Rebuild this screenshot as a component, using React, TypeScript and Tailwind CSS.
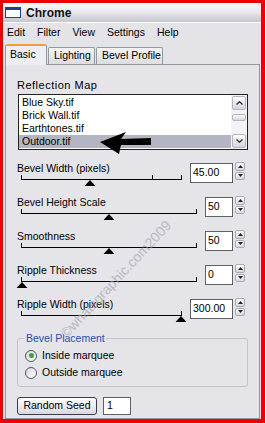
import React from "react";

const items = ["Blue Sky.tif", "Brick Wall.tif", "Earthtones.tif", "Outdoor.tif"];

const sliders = [
  { label: "Bevel Width (pixels)", value: "45.00", pos: 43, wide: true, midTick: true },
  { label: "Bevel Height Scale", value: "50", pos: 50, wide: false, midTick: false },
  { label: "Smoothness", value: "50", pos: 50, wide: false, midTick: false },
  { label: "Ripple Thickness", value: "0", pos: 0, wide: false, midTick: false },
  { label: "Ripple Width (pixels)", value: "300.00", pos: 100, wide: true, midTick: false },
];

function Spinner() {
  return (
    <div className="ml-[2px] mt-[1px] flex h-[18px] w-[10px] flex-col gap-[1px]">
      <div className="flex flex-1 items-center justify-center rounded-[2px] border border-[#a9a9b6] bg-gradient-to-b from-white to-[#d6d6de]">
        <svg width="5" height="3" viewBox="0 0 5 3"><path d="M0 3 L2.5 0 L5 3 Z" fill="#222" /></svg>
      </div>
      <div className="flex flex-1 items-center justify-center rounded-[2px] border border-[#a9a9b6] bg-gradient-to-b from-white to-[#d6d6de]">
        <svg width="5" height="3" viewBox="0 0 5 3"><path d="M0 0 L2.5 3 L5 0 Z" fill="#222" /></svg>
      </div>
    </div>
  );
}

function SliderRow({ label, value, pos, wide, midTick }: (typeof sliders)[number]) {
  return (
    <div className="flex h-[34px] items-start pl-[11px] pr-[14px]">
      <div className="flex-1">
        <div className="h-[14px] leading-[14px]">{label}</div>
        <div className="relative ml-[4px] h-[5px] border-x border-b border-black">
          {midTick && <div className="absolute bottom-0 left-[130px] h-[4px] w-px bg-black" />}
          <svg
            className="absolute top-[5px] -translate-x-1/2"
            style={{ left: `${pos}%` }}
            width="11"
            height="6"
            viewBox="0 0 11 6"
          >
            <path d="M0 6 L5.5 0 L11 6 Z" fill="#000" />
          </svg>
        </div>
      </div>
      <div
        className={`ml-[8px] mt-[2px] flex h-[20px] items-center border border-[#5f5f66] bg-white pl-[2px] ${
          wide ? "w-[43px]" : "w-[28px]"
        }`}
      >
        {value}
      </div>
      <Spinner />
    </div>
  );
}

function Radio({ checked, label }: { checked: boolean; label: string }) {
  return (
    <div className="flex h-[17px] items-center">
      <div className="flex h-[12px] w-[12px] items-center justify-center rounded-full border border-[#4d5866] bg-gradient-to-br from-[#d8d8de] to-white">
        {checked && <div className="h-[5px] w-[5px] rounded-full bg-[#37a33c]" />}
      </div>
      <span className="ml-[5px]">{label}</span>
    </div>
  );
}

export default function App() {
  return (
    <div className="relative h-[423px] w-[265px] overflow-hidden border-b-[4px] border-l-[3px] border-r-[4px] border-t-[3px] border-[#ee0000] bg-[#e3e3e8] font-['Liberation_Sans',Arial,sans-serif] text-[10.5px] text-black">
      {/* title bar */}
      <div className="flex h-[19px] items-center bg-gradient-to-b from-[#fbfbfc] via-[#e6e6ec] to-[#c6c6cf] pl-[2px]">
        <div className="h-[11px] w-[16px] border border-t-[3px] border-[#1f3f8f] bg-white" />
        <span className="ml-[5px] text-[12px] font-bold text-[#111]">Chrome</span>
      </div>
      <div className="h-px bg-white" />

      {/* menu */}
      <div className="flex h-[20px] items-center gap-[12px] pl-[4px]">
        <span>Edit</span>
        <span>Filter</span>
        <span>View</span>
        <span>Settings</span>
        <span>Help</span>
      </div>

      {/* tabs */}
      <div className="flex h-[21px] items-end pl-[2px]">
        <div className="relative z-10 -mb-px flex h-[21px] w-[42px] flex-col rounded-t-[2px] border-x border-[#919b9c] bg-[#eeeef2]">
          <div className="h-[2px] rounded-t-[2px] bg-[#f0a030]" />
          <span className="pl-[4px] pt-[1px] leading-[14px]">Basic</span>
        </div>
        <div className="ml-px flex h-[17px] w-[47px] items-center rounded-t-[2px] border-x border-t border-[#919b9c] bg-gradient-to-b from-[#f4f4f6] to-[#dcdce2] pl-[5px]">
          Lighting
        </div>
        <div className="ml-px flex h-[17px] w-[67px] items-center rounded-t-[2px] border-x border-t border-[#919b9c] bg-gradient-to-b from-[#f4f4f6] to-[#dcdce2] pl-[5px]">
          Bevel Profile
        </div>
      </div>

      {/* panel */}
      <div className="ml-[2px] mr-px flex h-[355px] flex-col border border-[#919b9c] bg-[#e4e4e9]">
        <div className="ml-[11px] mt-[13px] h-[14px] text-[11px] leading-[14px] tracking-[0.5px]">Reflection Map</div>

        <div className="ml-[12px] mr-[11px] mt-[2px] flex h-[56px] border border-[#222] bg-white">
          <div className="flex flex-1 flex-col pt-[1px]">
            {items.map((it, i) => (
              <div
                key={it}
                className={`flex h-[13px] items-center pl-[3px] ${i === 3 ? "bg-[#b3b5c2]" : ""}`}
              >
                {it}
              </div>
            ))}
          </div>
          <div className="flex w-[16px] flex-col bg-[#f3f3f6] p-px">
            <div className="flex h-[14px] items-center justify-center rounded-[2px] border border-[#b4b4c4] bg-gradient-to-b from-white to-[#d4d4de]">
              <svg width="7" height="4" viewBox="0 0 7 4"><path d="M0.5 3.5 L3.5 0.8 L6.5 3.5" fill="none" stroke="#333" strokeWidth="1.4" /></svg>
            </div>
            <div className="mt-[4px] h-[7px] rounded-[2px] border border-[#b4b4c4] bg-gradient-to-b from-white to-[#d6d6e0]" />
            <div className="flex-1" />
            <div className="flex h-[14px] items-center justify-center rounded-[2px] border border-[#b4b4c4] bg-gradient-to-b from-white to-[#d4d4de]">
              <svg width="7" height="4" viewBox="0 0 7 4"><path d="M0.5 0.5 L3.5 3.2 L6.5 0.5" fill="none" stroke="#333" strokeWidth="1.4" /></svg>
            </div>
          </div>
        </div>

        <div className="mt-[11px]">
          {sliders.map((s) => (
            <SliderRow key={s.label} {...s} />
          ))}
        </div>

        <fieldset className="mx-[11px] rounded-[3px] border border-[#c3c3cc] pb-[5px] pl-[7px]">
          <legend className="px-px leading-[14px] text-[#1f4fb5]">Bevel Placement</legend>
          <div className="pt-[2px]">
            <Radio checked label="Inside marquee" />
            <Radio checked={false} label="Outside marquee" />
          </div>
        </fieldset>

        <div className="ml-[11px] mt-[10px] flex h-[18px]">
          <div className="flex w-[80px] items-center justify-center rounded-[3px] border border-[#3c3c4c] bg-gradient-to-b from-white to-[#d8d8e2]">
            Random Seed
          </div>
          <div className="ml-[6px] flex w-[28px] items-center border border-[#5f5f66] bg-white pl-[3px]">1</div>
        </div>
      </div>

      {/* pointer arrow */}
      <svg className="absolute left-[95px] top-[126px]" width="56" height="27" viewBox="0 0 56 27">
        <path d="M2 13 L28 3 L23 10 L53 9 L53 16 L23 16 L21 25 Z" fill="#000" />
      </svg>

      {/* watermark */}
      <span className="pointer-events-none absolute left-[36px] top-[266px] rotate-[-47deg] whitespace-nowrap text-[14px] text-[#9c9ca8] opacity-60">
        ©whatsgraphic.com2009
      </span>
    </div>
  );
}
